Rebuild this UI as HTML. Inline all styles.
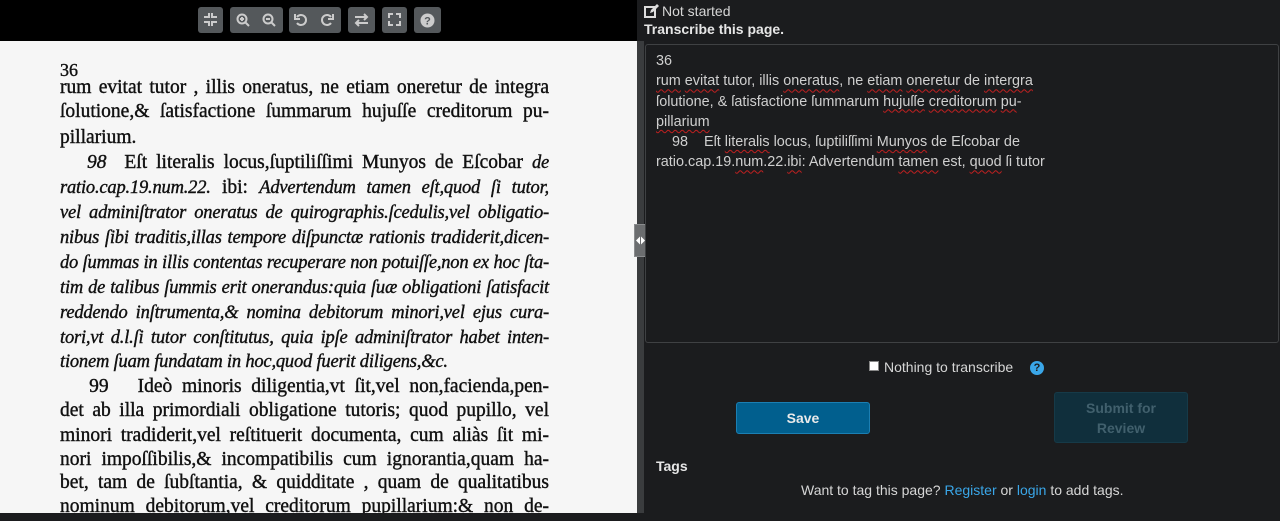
<!DOCTYPE html>
<html><head><meta charset="utf-8"><style>
*{margin:0;padding:0;box-sizing:border-box}
body{width:1280px;height:521px;overflow:hidden;background:#1b1c1e;position:relative;font-family:"Liberation Sans",sans-serif}
.top{position:absolute;left:0;top:0;width:637px;height:41px;background:#000}
.btn{position:absolute;top:7px;height:26px;background:#54585b;border-radius:3px}
.btn svg{position:absolute;top:6px}
.img{position:absolute;left:0;top:41px;width:637px;height:472px;background:#f6f6f6;overflow:hidden}
.ln{position:absolute;left:60px;width:489px;font-family:"Liberation Serif",serif;font-size:19.5px;color:#111;text-align:justify;text-align-last:justify;white-space:nowrap;line-height:24px;height:24px;-webkit-text-stroke:0.4px #111}
.i{font-style:italic;font-weight:normal;font-size:18.5px;letter-spacing:-0.2px}
.split{position:absolute;left:637px;top:41px;width:7px;height:472px;background:#3a3c3e}
.handle{position:absolute;left:634px;top:224px;width:13px;height:33px;background:#6b6d6f;border:1px solid #8a8c8e}
.r{color:#d6d6d6;font-size:14px;position:absolute}
.ta{position:absolute;left:645px;top:44px;width:634px;height:299px;border:1px solid #3f4143;border-radius:3px;background:#1b1c1e;padding:6px 10px;color:#cfcfcf;font-size:14.4px;line-height:20.3px;white-space:pre}
.sq{text-decoration:underline wavy #c02020;text-decoration-thickness:1px;text-underline-offset:3px}
</style></head><body>
<div class="top">
 <div class="btn" style="left:198px;width:25px"><svg style="left:6px" width="13" height="13" viewBox="0 0 13 13" fill="#ccc"><rect x="4" y="0" width="2" height="5"/><rect x="0" y="3" width="6" height="2"/><rect x="7" y="0" width="2" height="5"/><rect x="7" y="3" width="6" height="2"/><rect x="0" y="8" width="6" height="2"/><rect x="4" y="8" width="2" height="5"/><rect x="7" y="8" width="6" height="2"/><rect x="7" y="8" width="2" height="5"/></svg></div>
 <div class="btn" style="left:230px;width:53px"><svg style="left:6px" width="14" height="14" viewBox="0 0 14 14" fill="none" stroke="#ccc" stroke-width="2"><circle cx="6" cy="6" r="4.5"/><path d="M9.5 9.5L13 13M6 4v4M4 6h4"/></svg><svg style="left:32px" width="14" height="14" viewBox="0 0 14 14" fill="none" stroke="#ccc" stroke-width="2"><circle cx="6" cy="6" r="4.5"/><path d="M9.5 9.5L13 13M4 6h4"/></svg></div>
 <div class="btn" style="left:289px;width:52px"><svg style="left:5px" width="14" height="14" viewBox="0 0 14 14" fill="none" stroke="#ccc" stroke-width="2"><path d="M3 4a5 5 0 1 1 0 6"/><path d="M1 1v5h5"/></svg><svg style="left:31px" width="14" height="14" viewBox="0 0 14 14" fill="none" stroke="#ccc" stroke-width="2"><path d="M11 4a5 5 0 1 0 0 6"/><path d="M13 1v5h-5"/></svg></div>
 <div class="btn" style="left:348px;width:27px"><svg style="left:6px" width="15" height="14" viewBox="0 0 15 14" fill="none" stroke="#ccc" stroke-width="2"><path d="M1 4h12M10 1l3 3-3 3M14 10H2M5 7l-3 3 3 3"/></svg></div>
 <div class="btn" style="left:382px;width:25px"><svg style="left:6px" width="13" height="13" viewBox="0 0 13 13" fill="none" stroke="#ccc" stroke-width="2"><path d="M1 5V1h4M8 1h4v4M12 8v4H8M5 12H1V8"/></svg></div>
 <div class="btn" style="left:414px;width:27px"><svg style="left:6px" width="15" height="15" viewBox="0 0 15 15"><circle cx="7.5" cy="7.5" r="7" fill="#ccc"/><text x="7.5" y="11.5" font-size="11" font-weight="bold" text-anchor="middle" fill="#54585b" font-family="Liberation Sans">?</text></svg></div>
</div>
<div class="img">
<div class="ln" style="top:17px;text-align-last:left;font-size:18px">36</div>
<div class="ln" style="top:35px">rum evitat tutor , illis oneratus, ne etiam oneretur de integra</div>
<div class="ln" style="top:59px">ſolutione,&amp; ſatisfactione ſummarum hujuſſe creditorum pu-</div>
<div class="ln" style="top:85px;text-align-last:left">pillarium.</div>
<div class="ln" style="top:110px">&nbsp;&nbsp;&nbsp;<i>98</i>&nbsp;&nbsp;Eſt literalis locus,ſuptiliſſimi Munyos de Eſcobar <i class="i">de</i></div>
<div class="ln" style="top:135px"><span class="i">ratio.cap.19.num.22.</span> ibi: <span class="i">Advertendum tamen eſt,quod ſi tutor,</span></div>
<div class="ln i" style="top:160px">vel adminiſtrator oneratus de quirographis.ſcedulis,vel obligatio-</div>
<div class="ln i" style="top:185px">nibus ſibi traditis,illas tempore diſpunctæ rationis tradiderit,dicen-</div>
<div class="ln i" style="top:210px">do ſummas in illis contentas recuperare non potuiſſe,non ex hoc ſta-</div>
<div class="ln i" style="top:235px">tim de talibus ſummis erit onerandus:quia ſuæ obligationi ſatisfacit</div>
<div class="ln i" style="top:260px">reddendo inſtrumenta,&amp; nomina debitorum minori,vel ejus cura-</div>
<div class="ln i" style="top:285px">tori,vt d.l.ſi tutor conſtitutus, quia ipſe adminiſtrator habet inten-</div>
<div class="ln i" style="top:309px;text-align-last:left">tionem ſuam fundatam in hoc,quod fuerit diligens,&amp;c.</div>
<div class="ln" style="top:334px">&nbsp;&nbsp;&nbsp;99&nbsp;&nbsp;&nbsp;Ideò minoris diligentia,vt ſit,vel non,facienda,pen-</div>
<div class="ln" style="top:358px">det ab illa primordiali obligatione tutoris; quod pupillo, vel</div>
<div class="ln" style="top:383px">minori tradiderit,vel reſtituerit documenta, cum aliàs ſit mi-</div>
<div class="ln" style="top:407px">nori impoſſibilis,&amp; incompatibilis cum ignorantia,quam ha-</div>
<div class="ln" style="top:430px">bet, tam de ſubſtantia, &amp; quidditate , quam de qualitatibus</div>
<div class="ln" style="top:454px">nominum debitorum,vel creditorum pupillarium:&amp; non de-</div>
</div>
<div class="split"></div>
<div class="handle"><svg width="11" height="31" viewBox="0 0 11 31"><path d="M1 15.5l4-4v8zM10 15.5l-4-4v8z" fill="#fff"/></svg></div>
<svg style="position:absolute;left:644px;top:4px" width="15" height="14" viewBox="0 0 15 14"><rect x="1" y="3" width="10" height="10" fill="none" stroke="#ddd" stroke-width="2"/><path d="M6 9l1-3 6-6 2 2-6 6z" fill="#ddd"/></svg>
<div class="r" style="left:662px;top:3px">Not started</div>
<div class="r" style="left:644px;top:21px;font-weight:bold;color:#e6e6e6">Transcribe this page.</div>
<div class="ta">36
<span class="sq">rum</span> <span class="sq">evitat</span> tutor, illis <span class="sq">oneratus</span>, ne <span class="sq">etiam</span> <span class="sq">oneretur</span> de <span class="sq">intergra</span>
ſolutione, &amp; ſatisfactione ſummarum <span class="sq">hujuſſe</span> <span class="sq">creditorum</span> <span class="sq">pu</span>-
<span class="sq">pillarium</span>
    98    Eſt <span class="sq">literalis</span> locus, ſuptiliſſimi <span class="sq">Munyos</span> de Eſcobar de
ratio.cap.19.<span class="sq">num</span>.22.<span class="sq">ibi</span>: Advertendum <span class="sq">tamen</span> est, <span class="sq">quod</span> ſi tutor</div>
<div style="position:absolute;left:869px;top:361px;width:10px;height:10px;background:#fff;border:1px solid #888"></div>
<div class="r" style="left:884px;top:359px">Nothing to transcribe</div>
<div style="position:absolute;left:1030px;top:361px;width:14px;height:14px;border-radius:50%;background:#3aa6e8;color:#1b1c1e;font-size:11px;font-weight:bold;text-align:center;line-height:14px">?</div>
<div style="position:absolute;left:736px;top:402px;width:134px;height:32px;background:#015f8e;border:1px solid #1b7fb3;border-radius:3px;color:#eaeaea;font-weight:bold;font-size:14px;text-align:center;line-height:30px">Save</div>
<div style="position:absolute;left:1054px;top:392px;width:134px;height:51px;background:#102f3c;border:1px solid #163a48;border-radius:3px;color:#41606d;font-weight:bold;font-size:14px;text-align:center;line-height:20px;padding-top:5px">Submit for<br>Review</div>
<div class="r" style="left:656px;top:458px;font-weight:bold;color:#e6e6e6">Tags</div>
<div class="r" style="left:801px;top:482px">Want to tag this page? <span style="color:#3aa6e8">Register</span> or <span style="color:#3aa6e8">login</span> to add tags.</div>
</body></html>
